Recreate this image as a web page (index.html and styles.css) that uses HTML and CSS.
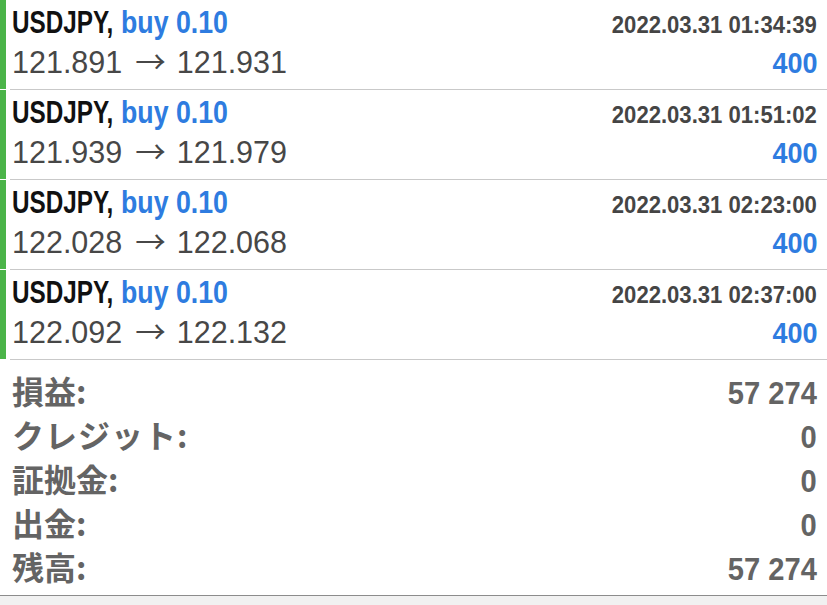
FILE: index.html
```html
<!DOCTYPE html>
<html>
<head>
<meta charset="utf-8">
<link rel="stylesheet" href="styles.css">
</head>
<body>
<div class="list">
  <div class="trade">
    <div class="line1"><span class="sym">USDJPY,</span><span class="side">buy 0.10</span><span class="date">2022.03.31 01:34:39</span></div>
    <div class="line2"><span class="price">121.891<span class="arrow">→</span>121.931</span><span class="pl">400</span></div>
  </div>
  <div class="trade">
    <div class="line1"><span class="sym">USDJPY,</span><span class="side">buy 0.10</span><span class="date">2022.03.31 01:51:02</span></div>
    <div class="line2"><span class="price">121.939<span class="arrow">→</span>121.979</span><span class="pl">400</span></div>
  </div>
  <div class="trade">
    <div class="line1"><span class="sym">USDJPY,</span><span class="side">buy 0.10</span><span class="date">2022.03.31 02:23:00</span></div>
    <div class="line2"><span class="price">122.028<span class="arrow">→</span>122.068</span><span class="pl">400</span></div>
  </div>
  <div class="trade">
    <div class="line1"><span class="sym">USDJPY,</span><span class="side">buy 0.10</span><span class="date">2022.03.31 02:37:00</span></div>
    <div class="line2"><span class="price">122.092<span class="arrow">→</span>122.132</span><span class="pl">400</span></div>
  </div>
</div>
<div class="summary">
  <div class="srow"><span class="label">損益:</span><span class="val">57 274</span></div>
  <div class="srow"><span class="label kana">クレジット:</span><span class="val">0</span></div>
  <div class="srow"><span class="label">証拠金:</span><span class="val">0</span></div>
  <div class="srow"><span class="label">出金:</span><span class="val">0</span></div>
  <div class="srow"><span class="label">残高:</span><span class="val">57 274</span></div>
</div>
<div class="footer"></div>
</body>
</html>
```
FILE: styles.css
```css
html, body {
  margin: 0;
  padding: 0;
  background: #ffffff;
  width: 827px;
  height: 605px;
  overflow: hidden;
}
body {
  font-family: "Liberation Sans", Arial, "Noto Sans CJK JP", sans-serif;
}
.trade {
  height: 89px;
  border-left: 6px solid #4bb449;
  position: relative;
  display: flex;
  flex-direction: column;
  padding: 0 10px 0 6px;
}
.trade::after {
  content: "";
  position: absolute;
  left: 4px;
  right: 0;
  bottom: -1px;
  height: 1px;
  background: #c9c9c9;
}
.trade + .trade {
  margin-top: 1px;
}
.line1 {
  display: flex;
  align-items: baseline;
  height: 44px;
  line-height: 44px;
}
.sym, .side, .date, .pl, .val {
  font-family: "Liberation Sans", Arial, sans-serif;
  font-weight: bold;
  display: inline-block;
  white-space: nowrap;
}
.sym {
  font-size: 32px;
  color: #111111;
  transform: scaleX(0.76);
  transform-origin: left center;
  margin-right: -33px;
}
.side {
  font-size: 32px;
  color: #2e7ce0;
  margin-left: 9px;
  transform: scaleX(0.835);
  transform-origin: left center;
}
.date {
  margin-left: auto;
  font-size: 24px;
  color: #454545;
  transform: scaleX(0.92);
  transform-origin: right center;
}
.line2 {
  display: flex;
  align-items: baseline;
  height: 45px;
}
.price {
  font-size: 30.5px;
  line-height: 33px;
  color: #474747;
  white-space: nowrap;
}
.arrow {
  font-family: "Noto Sans CJK JP", sans-serif;
  font-weight: normal;
  margin: 0 11px 0 13px;
}
.pl {
  margin-left: auto;
  font-size: 29px;
  color: #2e7ce0;
  transform: scaleX(0.93);
  transform-origin: right center;
}
.summary {
  padding: 9px 10px 0 12px;
  height: 237px;
  box-sizing: border-box;
  border-bottom: 1px solid #8c8c8c;
}
.srow {
  display: flex;
  align-items: baseline;
  height: 44px;
  line-height: 44px;
  color: #646464;
}
.label {
  font-family: "Noto Sans CJK JP", sans-serif;
  font-weight: bold;
  font-size: 32px;
}
.kana {
  letter-spacing: 1px;
}
.val {
  margin-left: auto;
  font-size: 32px;
  transform: scaleX(0.91);
  transform-origin: right center;
}
.footer {
  height: 20px;
  background: #f1f1f1;
}
```
